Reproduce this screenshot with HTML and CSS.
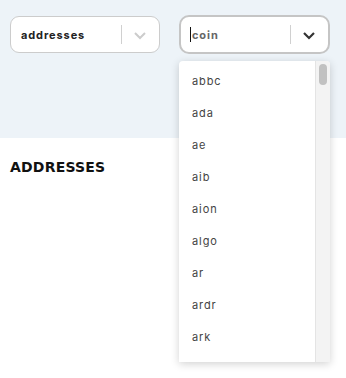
FILE: index.html
```html
<!DOCTYPE html>
<html lang="en">

<head>
    <meta charset="UTF-8">
    <meta name="viewport" content="width=device-width, initial-scale=1.0">
    <title>addresses</title>
    <link rel="stylesheet" href="styles.css">
</head>

<body>
    <div class="filters">
        <div class="select">
            <span class="value">addresses</span>
            <span class="sep"></span>
            <svg class="chevron light" width="14" height="14" viewBox="0 0 14 14">
                <path d="M2 5 L7 10 L12 5" fill="none" stroke="#cccccc" stroke-width="2" />
            </svg>
        </div>
        <div class="select-wrap">
            <div class="select focused">
                <span class="value input"><span class="caret"></span>coin</span>
                <span class="sep"></span>
                <svg class="chevron" width="14" height="14" viewBox="0 0 14 14">
                    <path d="M2 5 L7 10 L12 5" fill="none" stroke="#333333" stroke-width="2.2" />
                </svg>
            </div>
            <div class="menu">
                <ul class="options">
                    <li>abbc</li>
                    <li>ada</li>
                    <li>ae</li>
                    <li>aib</li>
                    <li>aion</li>
                    <li>algo</li>
                    <li>ar</li>
                    <li>ardr</li>
                    <li>ark</li>
                </ul>
                <div class="scrollbar">
                    <div class="thumb"></div>
                </div>
            </div>
        </div>
    </div>
    <h2 class="title">ADDRESSES</h2>
</body>

</html>
```

FILE: styles.css
```css
html,
body {
    height: 100%;
}

body {
    margin: 0;
    min-height: 378px;
    background-color: #ffffff;
    font-family: "Inter", "DejaVu Sans", sans-serif;
}

.filters {
    display: flex;
    gap: 19px;
    align-items: flex-start;
    height: 138px;
    padding: 15px 10px 0px 10px;
    box-sizing: border-box;
    background-color: #edf3f8;
}

.select-wrap {
    position: relative;
}

.select {
    display: flex;
    align-items: center;
    width: 150px;
    height: 37px;
    margin-top: 1px;
    box-sizing: border-box;
    background-color: #ffffff;
    border: 1px solid #cccccc;
    border-radius: 9px;
    padding: 0px 12px 0px 10px;
}

.select.focused {
    width: 151px;
    height: 39px;
    margin-top: 0px;
    border: 2px solid #c5c5c5;
    border-radius: 10px;
    padding-left: 9px;
    padding-right: 12px;
}

.value {
    flex: 1;
    font-size: 11px;
    font-weight: 700;
    letter-spacing: 0.9px;
    color: #222222;
}

.value.input {
    color: #666666;
    display: flex;
    align-items: center;
}

.caret {
    display: inline-block;
    width: 1px;
    height: 15px;
    background-color: #111111;
    margin-right: 1px;
}

.sep {
    width: 1px;
    height: 19px;
    background-color: #d0d0d0;
    margin-right: 11px;
}

.chevron {
    display: block;
}

.menu {
    position: absolute;
    top: 46px;
    left: 0px;
    width: 151px;
    height: 301px;
    display: flex;
    background-color: #ffffff;
    border-radius: 4px 4px 0px 0px;
    box-shadow: 0px 2px 8px rgba(0, 0, 0, 0.18);
    overflow: hidden;
}

.options {
    flex: 1;
    list-style: none;
    margin: 0px;
    padding: 4px 0px 0px 0px;
    overflow: hidden;
}

.options li {
    height: 32px;
    line-height: 32px;
    padding-left: 13px;
    font-size: 11px;
    letter-spacing: 0.9px;
    color: #444444;
}

.scrollbar {
    width: 14px;
    background-color: #f3f3f3;
    border-left: 1px solid #e4e4e4;
    padding-top: 3px;
}

.thumb {
    width: 8px;
    height: 21px;
    margin-left: 3px;
    background-color: #c1c1c1;
    border-radius: 4px;
}

.title {
    margin: 0px;
    padding: 21px 10px 20px 10px;
    font-family: "DejaVu Sans", sans-serif;
    font-size: 14px;
    font-weight: 700;
    color: #111111;
    letter-spacing: 0.2px;
}
```
